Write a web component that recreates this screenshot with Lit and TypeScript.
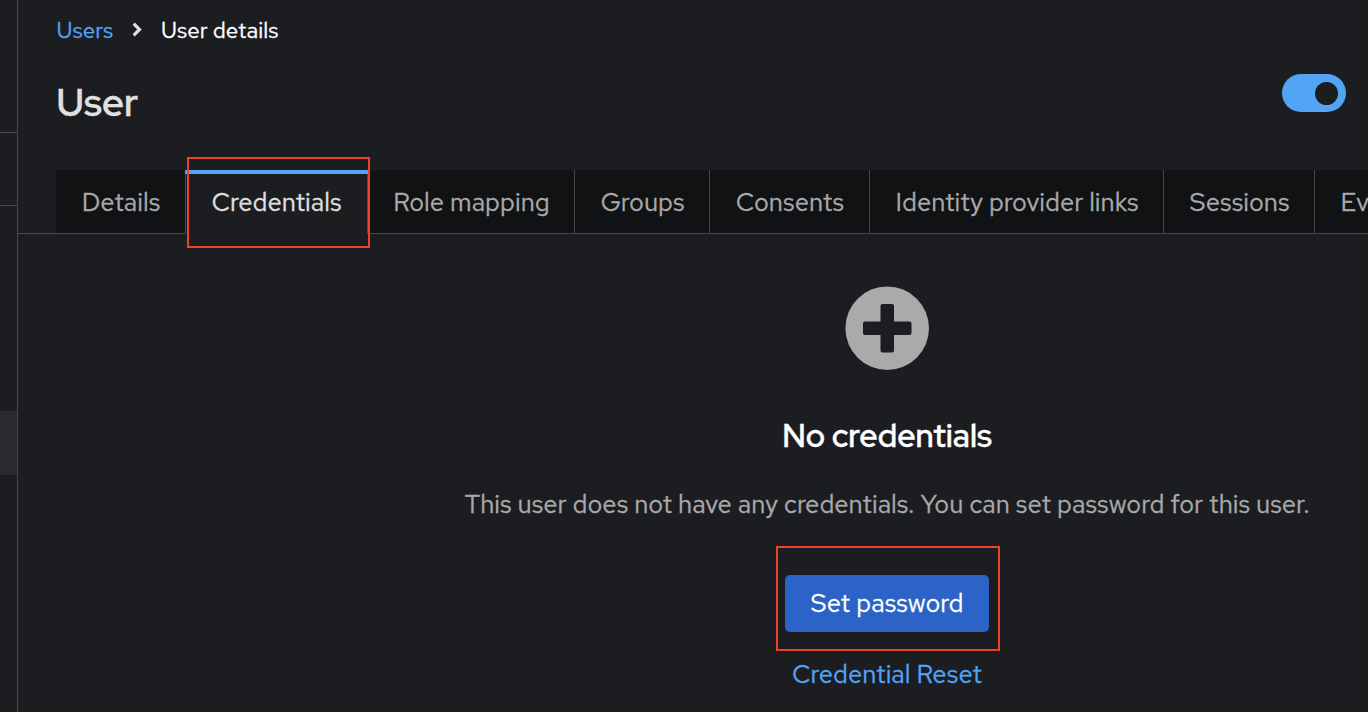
import { LitElement, html, css } from "lit";
import { customElement } from "lit/decorators.js";
import { classMap } from "lit/directives/class-map.js";

interface Tab {
  label: string;
  key: string;
  active?: boolean;
}

const TABS: Tab[] = [
  { label: "Details", key: "details" },
  { label: "Credentials", key: "credentials", active: true },
  { label: "Role mapping", key: "roles" },
  { label: "Groups", key: "groups" },
  { label: "Consents", key: "consents" },
  { label: "Identity provider links", key: "links" },
  { label: "Sessions", key: "sessions" },
  { label: "Events", key: "events" },
];

@customElement("app-root")
export class AppRoot extends LitElement {
  static styles = css`
    :host {
      display: flex;
      position: relative;
      width: 100%;
      height: 712px;
      overflow: hidden;
      background: #1c1d21;
      color: #e0e0e0;
      font-family: "Red Hat Text", Inter, "Noto Sans", sans-serif;
      font-size: 25.6px;
      -webkit-text-stroke: 0.3px currentColor;
      box-sizing: border-box;
    }
    * { box-sizing: border-box; }
    .rail {
      flex: 0 0 18px;
      display: flex;
      flex-direction: column;
      border-right: 1px solid #47484b;
    }
    .rail-top { height: 133px; border-bottom: 1px solid #47484b; }
    .rail-realm { height: 73px; border-bottom: 1px solid #47484b; }
    .rail-items { height: 205px; }
    .rail-current { height: 64px; background: #292a2d; }
    .main { flex: 1; min-width: 0; display: flex; flex-direction: column; }
    .crumbs {
      display: flex;
      align-items: center;
      height: 60px;
      padding-left: 38.4px;
      font-size: 22.4px;
      white-space: nowrap;
    }
    .crumb-link { width: 56.6px; color: #52a4f5; text-decoration: none; }
    .chevron { display: block; width: 10px; height: 15px; margin: 0 19px 2px 19px; }
    .crumb-here { color: #fff; }
    .title-row {
      display: flex;
      justify-content: space-between;
      height: 110px;
      padding: 14px 22px 0 38.4px;
    }
    h1, h2 { font-family: "Red Hat Display", "Red Hat Text", Inter, sans-serif; }
    h1 { margin: 6px 0 0; font-size: 38.4px; line-height: 46px; font-weight: 600; }
    .toggle {
      display: flex;
      align-items: center;
      justify-content: flex-end;
      width: 64px;
      height: 38px;
      padding-right: 8px;
      border: 0;
      border-radius: 19px;
      background: #52a4f5;
    }
    .knob { width: 23px; height: 23px; border-radius: 50%; background: #1c1d21; }
    .tabs { display: flex; height: 64px; }
    .tabs-lead { flex: 0 0 38px; border-bottom: 1px solid #47484b; }
    .tab {
      flex: none;
      display: flex;
      justify-content: center;
      align-items: center;
      padding-left: 1px;
      background: #111214;
      color: #a9aaac;
      border-right: 1px solid #47484b;
      border-bottom: 1px solid #47484b;
      white-space: nowrap;
    }
    .tab.active {
      margin-left: -1px;
      padding: 0 0 1px 0;
      border: 0;
      background:
        linear-gradient(#52a4f5, #52a4f5) 0 0 / 100% 4px no-repeat,
        linear-gradient(#47484b, #47484b) 0 0 / 1px 100% no-repeat,
        linear-gradient(#47484b, #47484b) 100% 0 / 1px 100% no-repeat,
        #1c1d21;
      color: #e0e0e0;
    }
    .details { width: 130px; }
    .credentials { width: 183px; }
    .roles { width: 207px; }
    .groups { width: 135px; }
    .consents { width: 160px; }
    .links { width: 294px; }
    .sessions { width: 151px; }
    .events { width: 135px; justify-content: flex-start; padding-left: 25.600px; }
    .empty {
      display: flex;
      flex-direction: column;
      align-items: center;
      width: 1350px;
      padding: 52px 0 0 388px;
    }
    .plus { display: block; width: 84px; height: 84px; }
    h2 { margin: 46px 0 0; font-size: 32px; line-height: 40px; font-weight: 600; color: #fff; white-space: nowrap; }
    .note { margin: 31px 0 0; line-height: 34px; color: #a9aaac; white-space: nowrap; }
    .primary {
      width: 204px;
      height: 57px;
      margin-top: 54px;
      padding: 0 0 2px;
      border: 0;
      border-radius: 5px;
      background: #2b64c6;
      color: #fff;
      font: inherit;
      -webkit-text-stroke: inherit;
      white-space: nowrap;
    }
    .reset { margin-top: 25px; line-height: 34px; color: #52a4f5; text-decoration: none; white-space: nowrap; }
    .crumb-link, .crumb-here, .tab, h1, h2, .note, .primary, .reset { -webkit-text-stroke-color: currentColor; }
    .mark { position: absolute; border: 2px solid #ed4228; pointer-events: none; }
    .mark-tab { left: 187px; top: 157px; width: 183px; height: 91px; }
    .mark-button { left: 776px; top: 546px; width: 224px; height: 105px; }
  `;

  render() {
    return html`
      <aside class="rail">
        <div class="rail-top"></div>
        <div class="rail-realm"></div>
        <div class="rail-items"></div>
        <div class="rail-current"></div>
      </aside>
      <main class="main">
        <nav class="crumbs">
          <a class="crumb-link">Users</a>
          <svg class="chevron" viewBox="0 0 10 15">
            <path d="M1.700 1.700 L7.500 7.500 L1.700 13.300" fill="none" stroke="#e0e0e0" stroke-width="3.200" />
          </svg>
          <span class="crumb-here">User details</span>
        </nav>
        <header class="title-row">
          <h1>User</h1>
          <button class="toggle" role="switch" aria-checked="true"><span class="knob"></span></button>
        </header>
        <nav class="tabs">
          <div class="tabs-lead"></div>
          ${TABS.map(
            (t) => html`<div class=${classMap({ tab: true, active: !!t.active, [t.key]: true })}>
              <span class="label">${t.label}</span>
            </div>`
          )}
        </nav>
        <section class="empty">
          <svg class="plus" viewBox="0 0 84 84">
            <circle cx="42.2" cy="42.2" r="41.800" fill="#a9aaac" />
            <path d="M37.500 18h9.500q2 0 2 2v15.500h15.500q2 0 2 2v9.500q0 2-2 2h-15.500v15.500q0 2-2 2h-9.500q-2 0-2-2v-15.500h-15.500q-2 0-2-2v-9.500q0-2 2-2h15.500v-15.500q0-2 2-2z" fill="#1c1d21" />
          </svg>
          <h2>No credentials</h2>
          <p class="note">This user does not have any credentials. You can set password for this user.</p>
          <button class="primary">Set password</button>
          <a class="reset">Credential Reset</a>
        </section>
      </main>
      <div class="mark mark-tab"></div>
      <div class="mark mark-button"></div>
    `;
  }
}
